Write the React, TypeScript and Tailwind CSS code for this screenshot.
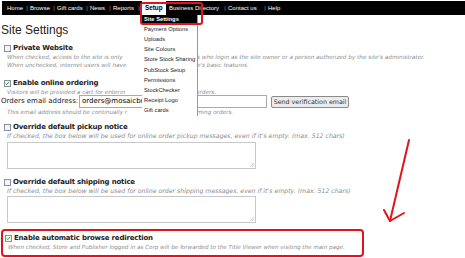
import React from "react";

const sans = { fontFamily: '"Liberation Sans", Arial, sans-serif' };
const verd = { fontFamily: '"DejaVu Sans", Verdana, sans-serif' };

function Box({ checked }: { checked?: boolean }) {
  return (
    <span className="relative inline-block w-[7px] h-[7px] border border-[#8a8fa0] bg-[#f4f4f4] shrink-0">
      {checked && (
        <svg viewBox="0 0 7 7" className="absolute left-0 top-0 w-[5px] h-[5px]">
          <path d="M0.8 3.4 L2.5 5 L5.5 1.2" stroke="#2ea02e" strokeWidth="1.3" fill="none" />
        </svg>
      )}
    </span>
  );
}

function Label({ checked, children }: { checked?: boolean; children: React.ReactNode }) {
  return (
    <div className="flex items-center gap-[2px] pl-[4px] h-[10px]">
      <Box checked={checked} />
      <span className="font-bold text-[7px] text-[#222] tracking-[-0.2px] leading-none" style={verd}>
        {children}
      </span>
    </div>
  );
}

function Desc({ children, size = "text-[5.7px]" }: { children: React.ReactNode; size?: string }) {
  return (
    <div className={`pl-[7px] italic ${size} text-[#8c8c8c] leading-[8px] whitespace-nowrap`} style={verd}>
      {children}
    </div>
  );
}

function SplitDesc({ before, after, gap = "ml-[55px]" }: { before: string; after: string; gap?: string }) {
  return (
    <div className="flex pl-[7px] italic text-[5.7px] text-[#8c8c8c] leading-[8px] whitespace-nowrap" style={verd}>
      <span className="w-[135px] shrink-0">{before}</span>
      <span className={gap}>{after}</span>
    </div>
  );
}

function TextArea() {
  return (
    <div className="relative ml-[7px] w-[249px] h-[27px] border border-[#c8c8c8] bg-white">
      <svg viewBox="0 0 4 4" className="absolute right-px bottom-px w-[4px] h-[4px]">
        <path d="M4 0 L0 4 M4 2 L2 4" stroke="#aaa" strokeWidth="0.6" />
      </svg>
    </div>
  );
}

function Sep() {
  return <span className="w-[6px] text-center text-[#9a9a9a] shrink-0">|</span>;
}

const menu = [
  "Payment Options",
  "Uploads",
  "Site Colours",
  "Store Stock Sharing",
  "PubStock Setup",
  "Permissions",
  "StockChecker",
  "Receipt Logo",
  "Gift cards",
];

export default function App() {
  return (
    <div className="relative w-[465px] h-[258px] bg-white overflow-hidden">
      {/* nav */}
      <div
        className="mt-px ml-[2px] h-[14px] bg-black flex items-center text-white text-[6px] pl-[5px] whitespace-nowrap"
        style={sans}
      >
        <span className="w-[17px] shrink-0">Home</span>
        <Sep />
        <span className="w-[21px] shrink-0">Browse</span>
        <Sep />
        <span className="w-[27px] shrink-0">Gift cards</span>
        <Sep />
        <span className="w-[17px] shrink-0">News</span>
        <Sep />
        <span className="w-[23px] shrink-0">Reports</span>
        <Sep />
        <span className="h-full w-[24px] shrink-0 flex items-center bg-white text-black font-bold pl-[3px] text-[6.3px]">
          Setup
        </span>
        <span className="ml-[3px] w-[53px] shrink-0">Business Directory</span>
        <Sep />
        <span className="w-[34px] shrink-0">Contact us</span>
        <Sep />
        <span>Help</span>
      </div>

      {/* heading */}
      <div className="mt-[8px] pl-px text-[12px] leading-[15px] text-[#222]" style={sans}>
        Site Settings
      </div>

      {/* Private Website */}
      <div className="mt-[5px]">
        <Label>Private Website</Label>
        <SplitDesc
          before="When checked, access to the site is only"
          after="s who login as the site owner or a person authorized by the site's administrator."
        />
        <SplitDesc before="When unchecked, internet users will have" after="e's basic features." />
      </div>

      {/* Online ordering */}
      <div className="mt-[9px]">
        <Label checked>Enable online ordering</Label>
        <SplitDesc before="Visitors will be provided a cart for enterin" after="orders." gap="ml-[54px]" />
        <div className="flex items-center h-[13px] mt-[-1px]">
          <span className="pl-px text-[7px] text-[#222] w-[79px] shrink-0" style={verd}>
            Orders email address:
          </span>
          <div className="w-[188px] h-[13px] border border-[#a9a9a9] flex items-center px-[2px] text-[7px] text-black shrink-0" style={verd}>
            <span className="whitespace-nowrap">orders@mosaicbo</span>
          </div>
          <div
            className="ml-[4px] h-[12px] w-[78px] border border-[#8a8a8a] rounded-[2px] bg-[#ececec] flex items-center justify-center text-[6.3px] text-[#333] shrink-0"
            style={verd}
          >
            Send verification email
          </div>
        </div>
        <SplitDesc before="This email address should be continually r" after="ming orders." />
      </div>

      {/* pickup */}
      <div className="mt-[6px]">
        <Label>Override default pickup notice</Label>
        <Desc size="text-[6.2px]">
          If checked, the box below will be used for online order pickup messages, even if it's empty. (max. 512 chars)
        </Desc>
        <div className="mt-[2px]">
          <TextArea />
        </div>
      </div>

      {/* shipping */}
      <div className="mt-[8px]">
        <Label>Override default shipping notice</Label>
        <Desc size="text-[6.2px]">
          If checked, the box below will be used for online order shipping messages, even if it's empty. (max. 512 chars)
        </Desc>
        <div className="mt-[1px]">
          <TextArea />
        </div>
      </div>

      {/* redirection */}
      <div className="mt-[6px] ml-px w-[363px] h-[28px] border-2 border-[#e0141c] rounded-[4px] pt-[2px]">
        <div className="-ml-[2px]">
          <Label checked>Enable automatic browse redirection</Label>
          <Desc size="text-[5.6px]">
            When checked, Store and Publisher logged in as Corp will be forwarded to the Title Viewer when visiting the main page.
          </Desc>
        </div>
      </div>

      {/* dropdown menu overlay */}
      <div className="absolute left-[142px] top-[15px] w-[56px] h-[101px] bg-white border-r border-[#9a9a9a] text-[5.75px] text-[#222]" style={sans}>
        <div className="h-[9px] bg-black text-white font-bold flex items-center pl-[2px]">Site Settings</div>
        {menu.map((m) => (
          <div key={m} className="h-[10.2px] flex items-center pl-[2px]">
            {m}
          </div>
        ))}
      </div>

      {/* red annotation box on Setup menu */}
      <div className="absolute left-[140px] top-[2px] w-[63px] h-[23px] border-2 border-[#e0141c] rounded-[3px]" />

      {/* red arrow */}
      <svg className="absolute left-0 top-0" width="465" height="258">
        <path d="M409 140 L390 221" stroke="#e0141c" strokeWidth="2" fill="none" strokeLinecap="round" />
        <path d="M384 210 L390 221 L404 213" stroke="#e0141c" strokeWidth="2" fill="none" strokeLinecap="round" strokeLinejoin="round" />
      </svg>
    </div>
  );
}
